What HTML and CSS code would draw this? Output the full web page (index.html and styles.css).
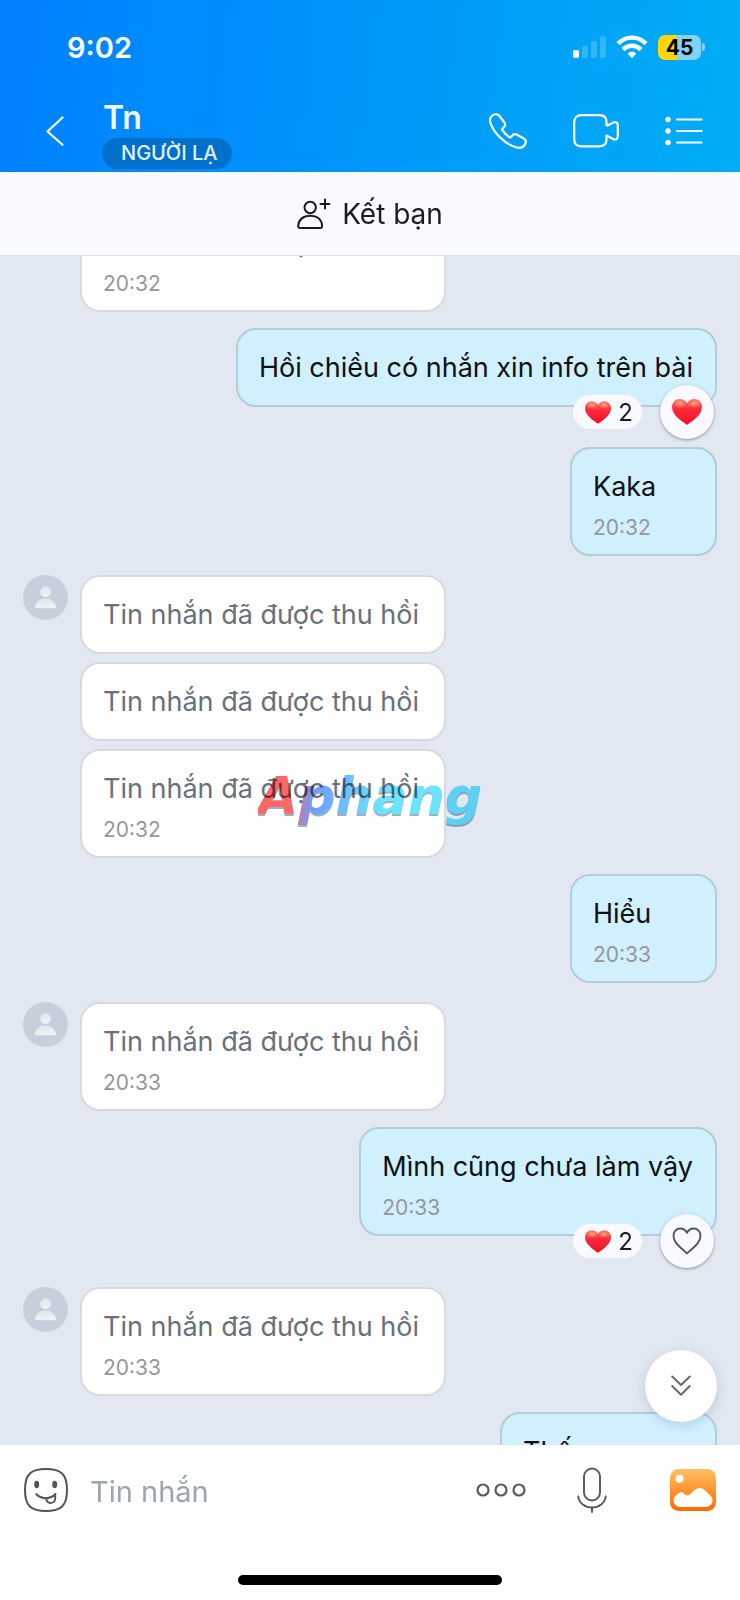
FILE: index.html
```html
<!DOCTYPE html>
<html lang="vi">
<head>
<meta charset="utf-8">
<meta name="viewport" content="width=device-width, initial-scale=1">
<title>Tn</title>
<link rel="stylesheet" href="styles.css">
</head>
<body>
<svg class="defs" aria-hidden="true">
  <defs>
    <linearGradient id="heart-fill" x1="0" y1="0" x2="0" y2="1">
      <stop offset="0" stop-color="#ff7a60"/><stop offset=".4" stop-color="#fc2a3a"/><stop offset="1" stop-color="#f40d27"/>
    </linearGradient>
    <radialGradient id="heart-shine">
      <stop offset="0" stop-color="#ffc89a" stop-opacity=".85"/><stop offset="1" stop-color="#ff8060" stop-opacity="0"/>
    </radialGradient>
    <linearGradient id="photo-fill" x1="0" y1="0" x2="0" y2="1">
      <stop offset="0" stop-color="#ffc163"/><stop offset="1" stop-color="#ff6a00"/>
    </linearGradient>
    <linearGradient id="person-fill" x1="0" y1="0" x2="0" y2="1">
      <stop offset="0" stop-color="#dfe9ee"/><stop offset="1" stop-color="#edf3f5"/>
    </linearGradient>
    <symbol id="heart" viewBox="0 0 30 26">
      <path fill="url(#heart-fill)" d="M15 26C11 22.500 0 17 0 8C0 3.500 3.300 0 7.600 0C11 0 13.700 1.700 15 4.200C16.300 1.700 19 0 22.400 0C26.700 0 30 3.500 30 8C30 17 19 22.500 15 26Z"/>
      <ellipse cx="8" cy="4.500" rx="7" ry="4.500" fill="url(#heart-shine)"/>
      <ellipse cx="22" cy="4.500" rx="7" ry="4.500" fill="url(#heart-shine)"/>
    </symbol>
    <symbol id="person" viewBox="0 0 46 46">
      <circle cx="23" cy="17" r="5.400" fill="url(#person-fill)"/>
      <path fill="url(#person-fill)" d="M14 34C12.600 34 11.900 33.200 12.200 32C13.400 27.300 17.700 24 23 24S32.600 27.300 33.800 32C34.100 33.200 33.400 34 32 34Z"/>
    </symbol>
  </defs>
</svg>
<div class="screen">
  <header class="header">
    <div class="status">
      <span class="status-time">9:02</span>
      <div class="status-icons">
        <svg class="signal" viewBox="0 0 33 22" fill="#fff" aria-hidden="true">
          <rect y="14" width="6" height="8" rx="1.800"/>
          <g opacity=".2"><rect x="9" y="10" width="6" height="12" rx="1.800"/><rect x="18" y="5" width="6" height="17" rx="1.800"/><rect x="27" width="6" height="22" rx="1.800"/></g>
        </svg>
        <svg class="wifi" viewBox="0 0 32 24" aria-hidden="true">
          <g fill="none" stroke="#fff" stroke-width="4.400"><path d="M2 8.600C9.800 .6 22.200 .6 30 8.600"/><path d="M7 14.600C12.200 9.400 19.800 9.400 25 14.600"/></g>
          <path fill="#fff" d="M11.600 18.600C14.200 16.200 17.800 16.200 20.400 18.600L16 23.300Z"/>
        </svg>
        <div class="battery"><span class="battery-body">45</span><span class="battery-tip"></span></div>
      </div>
    </div>
    <div class="nav">
      <button class="icon-button" aria-label="Quay lại">
        <svg width="18" height="30" viewBox="0 0 18 30" fill="none" stroke="#fff" stroke-width="2.200" stroke-linecap="round" stroke-linejoin="round"><path d="M16.500 1.500L1.500 15.500L16.500 28.800"/></svg>
      </button>
      <div class="contact">
        <h1 class="contact-name">Tn</h1>
        <span class="contact-tag">NGƯỜI LẠ</span>
      </div>
      <div class="nav-actions">
        <button class="icon-button" aria-label="Gọi thoại">
          <svg width="38" height="36" viewBox="0 0 38 36" fill="none" stroke="#fff" stroke-width="2.200" stroke-linejoin="round"><path d="M3 2.800C5 1 8.500 .5 10.300 2.800L15.300 9.400C16.800 11.500 16.400 12.800 14.800 14.300L13.500 15.500C13 16 13 16.500 13.400 17.200C15 19.800 17.500 22.300 20.300 24.200C21 24.600 21.500 24.500 22 24L23.500 22.300C24.800 21 26.300 20.800 28 21.700L34.800 25.500C37.300 27 37.200 29.300 36 31.500C34.500 34.300 31.500 35.300 28 34.500C16 31.500 4.300 19.500 1.300 9.500C.6 6.800 1 4.500 3 2.800Z"/></svg>
        </button>
        <button class="icon-button" aria-label="Gọi video">
          <svg width="46" height="34" viewBox="0 0 46 34" fill="none" stroke="#fff" stroke-width="2.200" stroke-linejoin="round"><path d="M33.500 12V8.500C33.500 4 31 1.200 26.500 1.200H8.200C3.700 1.200 1.200 4 1.200 8.500V25C1.200 29.500 3.700 32.300 8.200 32.300H26.500C31 32.300 33.500 29.500 33.500 25V21.500L40 25C43 26.300 44.800 25 44.800 22V11.500C44.800 8.500 43 7.300 40 8.700L33.500 12"/></svg>
        </button>
        <button class="icon-button" aria-label="Tùy chọn">
          <svg width="38" height="30" viewBox="0 0 38 30"><g fill="#fff"><circle cx="3" cy="3.500" r="2.700"/><circle cx="3" cy="15" r="2.700"/><circle cx="3" cy="26.500" r="2.700"/></g><path d="M12 3.500H36.500M12 15H36.500M12 26.500H36.500" stroke="#fff" stroke-width="2.200" stroke-linecap="round"/></svg>
        </button>
      </div>
    </div>
  </header>

  <button class="add-friend">
    <svg width="34" height="32" viewBox="0 0 34 32" fill="none" stroke="#1c1c1e" stroke-width="2" stroke-linecap="round" stroke-linejoin="round" aria-hidden="true"><circle cx="13.200" cy="9.500" r="5.700"/><path d="M1.200 27.500C1.700 21.500 6.500 17.800 13.200 17.800S24.600 21.500 25.100 27.500C25.200 29.300 24.700 30 23.200 30H3.100C1.600 30 1.100 29.300 1.200 27.500ZM28 1.500V10.500M23.500 6H32.500"/></svg>
    <span>Kết bạn</span>
  </button>

  <main class="chat">
    <div class="messages">
      <div class="group group-first">
        <div class="stack"><div class="bubble timed"><p class="text">Tin nhắn đã được thu hồi</p><time class="time">20:32</time></div></div>
      </div>
      <div class="group own">
        <div class="stack">
          <div class="bubble reacted">
            <p class="text">Hồi chiều có nhắn xin info trên bài</p>
            <div class="reactions">
              <span class="reaction-count"><svg width="26" height="23" aria-hidden="true"><use href="#heart"/></svg>2</span>
              <button class="reaction-button" aria-label="Bỏ thích"><svg width="30" height="26"><use href="#heart"/></svg></button>
            </div>
          </div>
          <div class="bubble timed short"><p class="text">Kaka</p><time class="time">20:32</time></div>
        </div>
      </div>
      <div class="group">
        <svg class="avatar" aria-hidden="true"><use href="#person"/></svg>
        <div class="stack">
          <div class="bubble"><p class="text">Tin nhắn đã được thu hồi</p></div>
          <div class="bubble"><p class="text">Tin nhắn đã được thu hồi</p></div>
          <div class="bubble timed"><p class="text">Tin nhắn đã được thu hồi</p><time class="time">20:32</time></div>
        </div>
      </div>
      <div class="group own">
        <div class="stack"><div class="bubble timed short"><p class="text">Hiểu</p><time class="time">20:33</time></div></div>
      </div>
      <div class="group">
        <svg class="avatar" aria-hidden="true"><use href="#person"/></svg>
        <div class="stack"><div class="bubble timed"><p class="text">Tin nhắn đã được thu hồi</p><time class="time">20:33</time></div></div>
      </div>
      <div class="group own">
        <div class="stack">
          <div class="bubble timed reacted">
            <p class="text">Mình cũng chưa làm vậy</p><time class="time">20:33</time>
            <div class="reactions">
              <span class="reaction-count"><svg width="26" height="23" aria-hidden="true"><use href="#heart"/></svg>2</span>
              <button class="reaction-button" aria-label="Thích"><svg width="30" height="28" viewBox="0 0 30 28" fill="none" stroke="#545454" stroke-width="1.800" stroke-linejoin="round"><path d="M15 26.500C11 22 1.500 17 1.500 8.700C1.500 4.500 4.300 1.500 8 1.500C11.300 1.500 13.800 3.200 15 6C16.200 3.200 18.700 1.500 22 1.500C25.700 1.500 28.500 4.500 28.500 8.700C28.500 17 19 22 15 26.500Z"/></svg></button>
            </div>
          </div>
        </div>
      </div>
      <div class="group">
        <svg class="avatar" aria-hidden="true"><use href="#person"/></svg>
        <div class="stack"><div class="bubble timed"><p class="text">Tin nhắn đã được thu hồi</p><time class="time">20:33</time></div></div>
      </div>
      <div class="group own">
        <div class="stack"><div class="bubble medium"><p class="text">Thế</p></div></div>
      </div>
    </div>
    <div class="watermark">Aphang</div>
    <button class="scroll-down" aria-label="Tin nhắn mới nhất">
      <svg width="20" height="22" viewBox="0 0 20 22" fill="none" stroke="#6b6b6b" stroke-width="2" stroke-linecap="round" stroke-linejoin="round"><path d="M1.200 1.500L10 10L18.800 1.500M1.200 11L10 19.800L18.800 11"/></svg>
    </button>
  </main>

  <footer class="composer">
    <div class="composer-row">
      <button class="icon-button" aria-label="Biểu tượng cảm xúc">
        <svg width="44" height="44" viewBox="0 0 44 44" fill="none" stroke="#545454" stroke-width="2" stroke-linecap="round" stroke-linejoin="round"><path d="M22 1C37 1 43 6 43 22S37 43 22 43S1 38 1 22S7 1 22 1Z"/><path d="M12.300 26C17 31.500 26.500 31.500 31.500 26M22.200 30C22 33 24 35 26.500 35C30.500 35 32 32 31 26.800"/><g fill="#545454" stroke="none"><ellipse cx="12.700" cy="16.500" rx="2.500" ry="3.700"/><ellipse cx="30.700" cy="16.500" rx="2.500" ry="3.700"/></g></svg>
      </button>
      <input class="composer-input" type="text" placeholder="Tin nhắn" aria-label="Tin nhắn">
      <button class="icon-button" aria-label="Thêm">
        <svg width="50" height="14" viewBox="0 0 50 14" fill="none" stroke="#5b5b5b" stroke-width="2.200"><circle cx="7" cy="7" r="5.500"/><circle cx="25" cy="7" r="5.500"/><circle cx="43" cy="7" r="5.500"/></svg>
      </button>
      <button class="icon-button mic" aria-label="Ghi âm">
        <svg width="30" height="46" viewBox="0 0 30 46" fill="none" stroke="#5b5b5b" stroke-width="2" stroke-linecap="round"><rect x="7" y="1.500" width="16" height="32" rx="8"/><path d="M1.300 29.500C2 36 8 40.500 15 40.500S28 36 28.700 29.500M15 40.500V45"/></svg>
      </button>
      <button class="icon-button" aria-label="Gửi ảnh">
        <svg width="46" height="42" viewBox="0 0 46 42"><rect width="46" height="42" rx="8.500" fill="url(#photo-fill)"/><circle cx="9.500" cy="9.800" r="4" fill="#fff"/><path fill="#fff" d="M11.500 38C6 38 3.500 35 3.500 31.500C3.500 28.500 5.500 26 8.500 24.200C10.300 22.800 12 22.800 13.800 24.400C16.500 27 18.300 27 21 24.300L24.500 21C27.500 18.300 31.500 18.300 34.500 21L40 26.200C41.600 28 42.500 29.500 42.500 31.500C42.500 35 40 38 34.500 38Z"/></svg>
      </button>
    </div>
    <div class="home-bar"></div>
  </footer>
</div>
</body>
</html>
```

FILE: styles.css
```css
* {
  box-sizing: border-box;
}

body {
  margin: 0;
  font-family: Inter, "Liberation Sans", sans-serif;
  color: #0e1114;
}

button {
  border: 0;
  padding: 0;
  background: none;
  font: inherit;
  color: inherit;
}

svg {
  display: block;
}

.defs {
  position: absolute;
  width: 0;
  height: 0;
}

.screen {
  display: flex;
  flex-direction: column;
  height: 100vh;
}

.header {
  color: #fff;
  background: linear-gradient(98deg, #0080ff, #00aef5);
}

.status {
  display: flex;
  align-items: center;
  justify-content: space-between;
  height: 90px;
  padding: 4px 35px 0 67px;
}

.status-time {
  font-size: 29px;
  font-weight: 600;
}

.status-icons {
  display: flex;
  align-items: center;
  gap: 10px;
}

.signal {
  width: 33px;
  height: 22px;
}

.wifi {
  width: 32px;
  height: 24px;
}

.battery {
  display: flex;
  align-items: center;
  gap: 1px;
}

.battery-body {
  width: 43px;
  border-radius: 7px;
  background: linear-gradient(90deg, #ffd60a 45%, #80d3fb 45%);
  color: #000;
  font-size: 21px;
  font-weight: 700;
  line-height: 25px;
  text-align: center;
}

.battery-tip {
  width: 3px;
  height: 8px;
  border-radius: 0 4px 4px 0;
  background: #80d3fb;
}

.nav {
  display: flex;
  align-items: center;
  height: 82px;
  padding: 0 37px 0 46px;
}

.contact {
  flex: 1;
  display: flex;
  flex-direction: column;
  align-items: flex-start;
  align-self: flex-end;
  gap: 2px;
  margin-left: 38px;
  padding-bottom: 3px;
}

.contact-name {
  margin: 0;
  padding-left: 1px;
  color: #f2f8ff;
  font-size: 32px;
  font-weight: 600;
  line-height: 36px;
}

.contact-tag {
  padding: 0 15px 0 19px;
  border-radius: 16px;
  background: #0070cc;
  color: #e4f1fd;
  font-size: 20px;
  font-weight: 500;
  line-height: 31px;
}

.nav-actions {
  display: flex;
  align-items: center;
  gap: 46px;
}

.add-friend {
  display: flex;
  align-items: center;
  justify-content: center;
  gap: 11px;
  height: 84px;
  flex: none;
  border-bottom: 1px solid #dfe3e8;
  background: #f9faff;
  color: #1c1c1e;
  font-size: 28px;
}

.chat {
  position: relative;
  flex: 1;
  min-height: 0;
  overflow: hidden;
  background: #e2e8f1;
}

.messages {
  display: flex;
  flex-direction: column;
  gap: 19px;
  padding: 0 23px;
}

.group {
  display: flex;
  align-items: flex-start;
  gap: 12px;
}

.group-first {
  margin-top: -53px;
  padding-left: 57px;
}

.own {
  justify-content: flex-end;
  margin-top: -3px;
}

.avatar {
  width: 45px;
  height: 45px;
  border-radius: 50%;
  background: #c8cfdc;
}

.stack {
  display: flex;
  flex-direction: column;
  align-items: flex-start;
  gap: 8px;
}

.own .stack {
  align-items: flex-end;
}

.bubble {
  position: relative;
  padding: 20px 25px 20px 21px;
  border: 2px solid #d9dadb;
  border-radius: 20px;
  background: #fff;
  color: #67717b;
}

.own .bubble {
  padding-right: 22px;
  border-color: #b4ccd6;
  background: #d0f0fe;
  color: #0e1114;
}

.bubble.timed {
  padding-bottom: 14px;
}

.short {
  min-width: 147px;
}

.medium {
  min-width: 217px;
}

.reacted {
  margin-bottom: 32px;
}

.text {
  margin: 0;
  font-size: 27px;
  line-height: 35px;
}

.time {
  display: block;
  margin-top: 12px;
  color: #979797;
  font-size: 21px;
  line-height: 24px;
}

.reactions {
  position: absolute;
  right: 1px;
  bottom: -34px;
  display: flex;
  align-items: center;
  gap: 18px;
}

.reaction-count {
  display: flex;
  align-items: center;
  gap: 7px;
  height: 34px;
  padding: 0 9px 0 12px;
  border-radius: 17px;
  background: #f9faff;
  color: #1c1c1e;
  font-size: 24px;
}

.reaction-button {
  display: flex;
  align-items: center;
  justify-content: center;
  width: 54px;
  height: 54px;
  border-radius: 50%;
  background: #f9faff;
  box-shadow: 0 1px 3px rgba(40, 60, 80, 0.5);
}

.watermark {
  position: absolute;
  top: 504px;
  left: 50%;
  transform: translateX(-50%);
  background: linear-gradient(98deg, #ff6666 16%, #6f9cff 26%, #6fb0ff 34%, #6ee4ff 56%, #68e6ff 90%);
  background-clip: text;
  color: transparent;
  filter: drop-shadow(0 2px 0 rgba(60, 100, 120, 0.5));
  mix-blend-mode: multiply;
  font-family: "DejaVu Sans", sans-serif;
  font-size: 52px;
  font-style: italic;
  font-weight: 700;
  line-height: 72px;
}

.scroll-down {
  position: absolute;
  right: 23px;
  bottom: 23px;
  display: flex;
  align-items: center;
  justify-content: center;
  width: 72px;
  height: 72px;
  border-radius: 50%;
  background: #fff;
  box-shadow: 0 3px 12px rgba(80, 110, 150, 0.25);
}

.composer {
  display: flex;
  flex-direction: column;
  justify-content: space-between;
  height: 155px;
  flex: none;
  padding: 22px 24px 15px;
  background: #fff;
}

.composer-row {
  display: flex;
  align-items: center;
}

.composer-input {
  flex: 1;
  min-width: 0;
  margin: 0 22px;
  padding: 2px 0 0;
  border: 0;
  outline: 0;
  background: none;
  font: inherit;
  font-size: 29px;
}

.composer-input::placeholder {
  color: #9ba5ae;
  opacity: 1;
}

.mic {
  margin: 0 63px 0 51px;
}

.home-bar {
  align-self: center;
  width: 264px;
  height: 10px;
  border-radius: 5px;
  background: #000;
}
```
